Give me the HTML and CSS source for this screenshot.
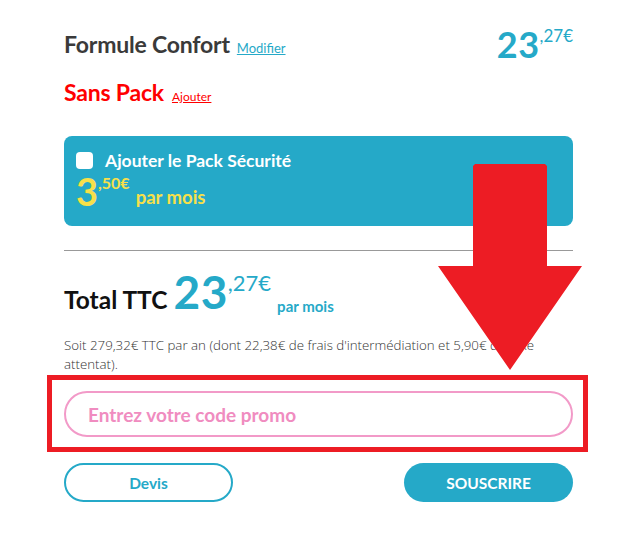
FILE: index.html
```html
<!DOCTYPE html>
<html lang="fr">
<head>
<meta charset="utf-8">
<link rel="stylesheet" href="styles.css">
</head>
<body>
<div class="page">
  <div class="row-formule">
    <div class="formule">
      <span class="title">Formule Confort</span>
      <a class="link-blue">Modifier</a>
    </div>
    <div class="price-top"><span class="big">23</span><span class="sup">,27€</span></div>
  </div>
  <div class="row-pack">
    <span class="title red">Sans Pack</span>
    <a class="link-red">Ajouter</a>
  </div>
  <div class="pack-box">
    <div class="pack-head">
      <span class="checkbox"></span>
      <span class="pack-label">Ajouter le Pack Sécurité</span>
    </div>
    <div class="pack-price"><span class="big">3</span><span class="sup">,50€</span><span class="per">par mois</span></div>
  </div>
  <hr class="sep">
  <div class="total">
    <span class="total-label">Total TTC</span>
    <span class="big">23</span><span class="sup">,27€</span><span class="per">par mois</span>
  </div>
  <p class="note">Soit 279,32€ TTC par an (dont 22,38€ de frais d'intermédiation et 5,90€ de taxe attentat).</p>
  <div class="promo-frame">
    <div class="promo">Entrez votre code promo</div>
  </div>
  <div class="actions">
    <div class="btn btn-outline">Devis</div>
    <div class="btn btn-fill">SOUSCRIRE</div>
  </div>
  <svg class="arrow" width="641" height="544" viewBox="0 0 641 544">
    <polygon points="475,164 545,164 547,166 547,266 582,266 510,370 438,266 473,266 473,166" fill="#ed1c24"/>
  </svg>
</div>
</body>
</html>
```
FILE: styles.css
```css
* { box-sizing: border-box; }
html, body { margin: 0; padding: 0; background: #fff; }
body { font-family: "Lato", "Open Sans", sans-serif; color: #333; }
.page { position: relative; width: 641px; height: 544px; padding: 26px 68px 0 64px; }

.row-formule { display: flex; justify-content: space-between; align-items: flex-start; height: 50px; }
.formule { display: flex; align-items: baseline; gap: 7px; padding-top: 4px; }
.title { font-size: 23px; font-weight: 700; color: #3a3a3a; letter-spacing: -0.2px; }
.title.red { color: #ff0000; }
.link-blue { font-size: 13px; color: #25a9c8; text-decoration: underline; }
.link-red { font-size: 12px; color: #ff0000; text-decoration: underline; }
.price-top { color: #25a9c8; font-weight: 700; display: flex; align-items: flex-start; }
.price-top .big { font-size: 36px; line-height: 36px; letter-spacing: 0.5px; }
.price-top .sup { font-size: 17px; line-height: 16px; margin-top: 2px; font-weight: 400; }

.row-pack { display: flex; align-items: baseline; gap: 8px; height: 60px; padding-top: 2px; }

.pack-box { background: #25a9c8; border-radius: 8px; height: 90px; padding: 14px 12px 0 12px; }
.pack-head { display: flex; align-items: center; gap: 12px; }
.checkbox { width: 17px; height: 17px; background: #fff; border-radius: 4px; display: inline-block; }
.pack-label { color: #fff; font-size: 17.5px; font-weight: 700; }
.pack-price { color: #f7e04a; font-weight: 700; display: flex; align-items: flex-start; margin-top: 0; }
.pack-price .big { font-size: 38px; line-height: 40px; }
.pack-price .sup { font-size: 16px; line-height: 16px; margin-top: 4px; }
.pack-price .per { font-size: 18.5px; line-height: 20px; margin-top: 16px; margin-left: 6px; }

.sep { border: 0; border-top: 1px solid #999; margin: 24px 0 0 0; height: 0; }

.total { display: flex; align-items: flex-start; margin-top: 18px; height: 52px; }
.total-label { font-size: 24.5px; font-weight: 700; color: #111; margin-top: 16px; margin-right: 6px; }
.total .big { font-size: 46px; line-height: 46px; font-weight: 700; color: #25a9c8; letter-spacing: 0.5px; }
.total .sup { font-size: 22px; line-height: 20px; font-weight: 400; color: #25a9c8; margin-top: 4px; }
.total .per { font-size: 15px; font-weight: 700; color: #25a9c8; margin-top: 28px; margin-left: 6px; }

.note { font-family: "Open Sans", sans-serif; font-weight: 300; font-size: 13.3px; line-height: 19px; color: #333; margin: 0; padding-top: 15px; height: 54px; }

.promo-frame { border: 5px solid #ed1c24; margin: 0 -15px 0 -17px; padding: 11px 10px 10px 12px; }
.promo { height: 46px; border: 2px solid #f29ac8; border-radius: 23px; color: #f08cc0; font-size: 19px; font-weight: 700; display: flex; align-items: center; padding-left: 22px; }

.actions { display: flex; justify-content: space-between; margin-top: 11px; }
.btn { width: 169px; height: 39px; border-radius: 20px; display: flex; align-items: center; justify-content: center; font-size: 15.5px; font-weight: 700; }
.btn-outline { border: 2px solid #25a9c8; color: #25a9c8; }
.btn-fill { background: #25a9c8; color: #fff; }

.arrow { position: absolute; left: 0; top: 0; pointer-events: none; }
```
